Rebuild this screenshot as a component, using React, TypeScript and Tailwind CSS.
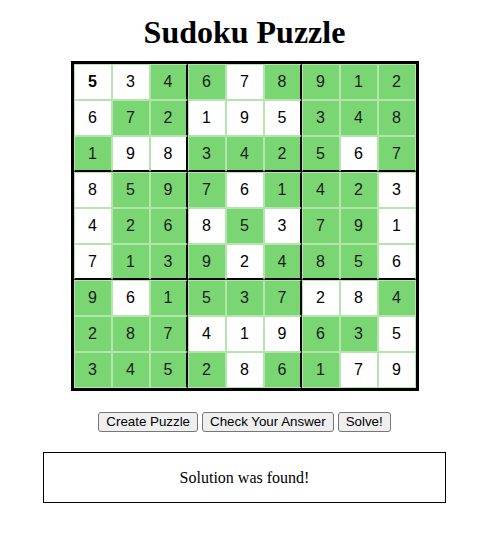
import React from "react";

const solution = [
  [5, 3, 4, 6, 7, 8, 9, 1, 2],
  [6, 7, 2, 1, 9, 5, 3, 4, 8],
  [1, 9, 8, 3, 4, 2, 5, 6, 7],
  [8, 5, 9, 7, 6, 1, 4, 2, 3],
  [4, 2, 6, 8, 5, 3, 7, 9, 1],
  [7, 1, 3, 9, 2, 4, 8, 5, 6],
  [9, 6, 1, 5, 3, 7, 2, 8, 4],
  [2, 8, 7, 4, 1, 9, 6, 3, 5],
  [3, 4, 5, 2, 8, 6, 1, 7, 9],
];

// 1 = filled by the solver (green), 0 = given clue (white)
const solved = [
  "001101111",
  "011000111",
  "100111101",
  "011101110",
  "011010110",
  "011101110",
  "101111001",
  "111000110",
  "111101100",
];

const buttonClass =
  "px-[7px] py-[1px] bg-[#efefef] border border-[#767676] rounded-[3px] text-[13.33px] leading-[16px] text-black font-['Liberation_Sans',Arial,sans-serif]";

export default function App() {
  return (
    <div className="min-h-screen bg-white pl-[6px] flex flex-col items-center">
      <h1 className="mt-[14px] text-[32px] leading-[37px] font-bold text-black font-['Liberation_Serif','Times_New_Roman',serif]">
        Sudoku Puzzle
      </h1>

      {/* board */}
      <div className="mt-[10px] grid grid-cols-9 border-[3px] border-black font-['Liberation_Sans',Arial,sans-serif]">
        {solution.map((row, r) =>
          row.map((n, c) => {
            const green = solved[r][c] === "1";
            return (
              <div
                key={`${r}-${c}`}
                className={`w-[38px] h-[36px] flex items-center justify-center text-[16px] border border-[#b3e5ad] ${
                  green ? "bg-[#79d672] text-[#1b1b1b]" : "bg-white text-black"
                } ${c === 2 || c === 5 ? "border-r-2 border-r-black" : ""} ${
                  r === 2 || r === 5 ? "border-b-2 border-b-black" : ""
                } ${r === 0 && c === 0 ? "font-bold" : ""}`}
              >
                {n}
              </div>
            );
          })
        )}
      </div>

      <div className="mt-[21px] flex gap-[4px]">
        <button className={buttonClass}>Create Puzzle</button>
        <button className={buttonClass}>Check Your Answer</button>
        <button className={buttonClass}>Solve!</button>
      </div>

      <div className="mt-[20px] w-[403px] border border-black py-[15px] text-center text-[16px] leading-[19px] text-black font-['Liberation_Serif','Times_New_Roman',serif]">
        Solution was found!
      </div>
    </div>
  );
}
